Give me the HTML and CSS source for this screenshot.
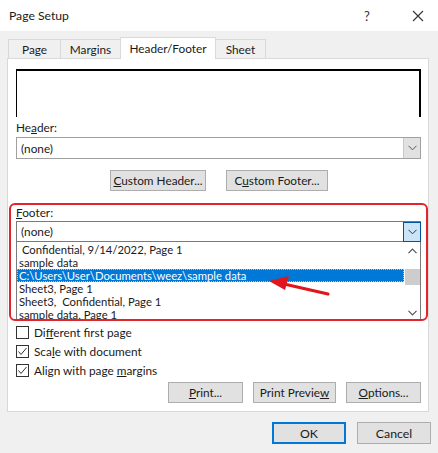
FILE: index.html
```html
<!DOCTYPE html>
<html>
<head>
<meta charset="utf-8">
<link rel="stylesheet" href="styles.css">
</head>
<body>
<div class="dialog">
  <div class="titlebar">
    <span class="title">Page Setup</span>
    <span class="help">?</span>
    <span class="close"><svg width="12" height="12" viewBox="0 0 12 12"><path d="M1 1L11 11M11 1L1 11" stroke="#333" stroke-width="1.1" fill="none"/></svg></span>
  </div>
  <div class="tabs">
    <div class="tab t-page">Page</div>
    <div class="tab t-margins">Margins</div>
    <div class="tab t-hf active">Header/Footer</div>
    <div class="tab t-sheet">Sheet</div>
  </div>
  <div class="panel">
    <div class="preview"></div>
    <div class="label">He<u>a</u>der:</div>
    <div class="select">
      <span class="value">(none)</span>
      <span class="dropbtn"><svg width="9" height="6" viewBox="0 0 9 6"><path d="M0.5 0.8L4.5 4.8L8.5 0.8" stroke="#555" stroke-width="1" fill="none"/></svg></span>
    </div>
    <div class="custom-row">
      <div class="btn custom"><span><u>C</u>ustom Header...</span></div>
      <div class="btn custom"><span>C<u>u</u>stom Footer...</span></div>
    </div>
    <div class="highlight">
      <div class="label f-label"><u>F</u>ooter:</div>
      <div class="select focus">
        <span class="value">(none)</span>
        <span class="dropbtn hot"><svg width="9" height="6" viewBox="0 0 9 6"><path d="M0.5 0.8L4.5 4.8L8.5 0.8" stroke="#333" stroke-width="1" fill="none"/></svg></span>
      </div>
      <div class="listbox">
        <div class="items">
          <div class="item"> Confidential, 9/14/2022, Page 1</div>
          <div class="item">sample data</div>
          <div class="item sel">C:\Users\User\Documents\weez\sample data</div>
          <div class="item">Sheet3, Page 1</div>
          <div class="item">Sheet3,  Confidential, Page 1</div>
          <div class="item">sample data, Page 1</div>
        </div>
        <div class="scrollbar">
          <span class="arrow"><svg width="9" height="6" viewBox="0 0 9 6"><path d="M0.5 5.2L4.5 1.2L8.5 5.2" stroke="#555" stroke-width="1.2" fill="none"/></svg></span>
          <span class="thumb"></span>
          <span class="arrow down"><svg width="9" height="6" viewBox="0 0 9 6"><path d="M0.5 0.8L4.5 4.8L8.5 0.8" stroke="#555" stroke-width="1.2" fill="none"/></svg></span>
        </div>
      </div>
      <svg class="red-arrow" width="70" height="26" viewBox="0 0 70 26">
        <path d="M62 19 L18 9" stroke="#e0161c" stroke-width="3.2" stroke-linecap="round" fill="none"/>
        <path d="M3 6 L23 1 L19 15 Z" fill="#e0161c"/>
      </svg>
    </div>
    <div class="checks">
      <div class="check"><span class="box"></span><span>Di<u>f</u>ferent first page</span></div>
      <div class="check"><span class="box"><svg width="11" height="11" viewBox="0 0 11 11"><path d="M1.5 5.5L4 8.5L9.5 2" stroke="#333" stroke-width="1" fill="none"/></svg></span><span>Sca<u>l</u>e with document</span></div>
      <div class="check"><span class="box"><svg width="11" height="11" viewBox="0 0 11 11"><path d="M1.5 5.5L4 8.5L9.5 2" stroke="#333" stroke-width="1" fill="none"/></svg></span><span>Align with page <u>m</u>argins</span></div>
    </div>
    <div class="print-row">
      <div class="btn pbtn"><span><u>P</u>rint...</span></div>
      <div class="btn pbtn"><span>Print Previe<u>w</u></span></div>
      <div class="btn pbtn"><span><u>O</u>ptions...</span></div>
    </div>
  </div>
  <div class="footer-row">
    <div class="btn fbtn ok"><span>OK</span></div>
    <div class="btn fbtn"><span>Cancel</span></div>
  </div>
</div>
</body>
</html>
```
FILE: styles.css
```css
* { box-sizing: border-box; }
html, body { margin: 0; padding: 0; }
body {
  width: 438px;
  height: 453px;
  overflow: hidden;
  background: #f0f0f0;
  font-family: Lato, "Noto Sans", sans-serif;
  font-size: 11.8px;
  color: #1a1a1a;
}
u { text-decoration: underline; text-underline-offset: 1px; }
.dialog { width: 438px; height: 453px; position: relative; }
.titlebar {
  height: 31px;
  background: #fff;
  display: flex;
  align-items: center;
  padding-left: 9px;
}
.title { font-size: 12.2px; flex: 1; }
.help { width: 14px; margin-right: 34px; font-size: 13px; color: #333; }
.close { width: 12px; margin-right: 14px; display: flex; }
.tabs {
  display: flex;
  align-items: flex-end;
  margin-top: 7px;
  padding-left: 8px;
  height: 21px;
  position: relative;
  z-index: 2;
}
.tab {
  height: 19px;
  border: 1px solid #d9d9d9;
  border-bottom: none;
  background: #f0f0f0;
  display: flex;
  align-items: center;
  justify-content: center;
  margin-bottom: 1px;
  margin-right: -1px;
}
.t-page { width: 53px; }
.t-margins { width: 61px; }
.t-hf { width: 96px; }
.t-sheet { width: 51px; }
.tab.active {
  height: 22px;
  background: #fff;
  margin-bottom: 0;
  position: relative;
}
.panel {
  margin-top: -1px;
  margin-left: 7px;
  width: 422px;
  height: 354px;
  background: #fff;
  border: 1px solid #d9d9d9;
  padding: 10px 7px 0 8px;
}
.preview {
  height: 48px;
  border-top: 2px solid #000;
  border-left: 1px solid #000;
  border-right: 2px solid #000;
}
.label { height: 16px; line-height: 16px; margin-top: 3px; margin-bottom: 1px; }
.select {
  height: 22px;
  border: 1px solid #a0a0a0;
  display: flex;
  align-items: center;
  padding-left: 4px;
}
.select .value { flex: 1; }
.dropbtn {
  width: 17px;
  height: 20px;
  background: #e1e1e1;
  border-left: 1px solid #c8c8c8;
  display: flex;
  align-items: center;
  justify-content: center;
}
.custom-row {
  display: flex;
  gap: 20px;
  margin-top: 11px;
  padding-left: 94px;
}
.btn {
  height: 21px;
  background: #e1e1e1;
  border: 1px solid #adadad;
  display: flex;
  align-items: center;
  justify-content: center;
  white-space: nowrap;
}
.custom { width: 96px; }
.custom + .custom { width: 102px; }
.highlight {
  margin: 12px -7px 0 -7px;
  height: 118px;
  border: 2px solid #e0252c;
  border-radius: 6px;
  padding: 0 5px;
  position: relative;
  overflow: hidden;
}
.f-label { margin-top: 0; margin-bottom: 0; height: 16px; line-height: 15px; }
.select.focus { height: 20px; border-color: #7a7a7a; border-bottom: none; }
.dropbtn.hot {
  height: 20px;
  width: 18px;
  background: #cce4f7;
  border: 1px solid #005499;
  margin-right: -1px;
}
.listbox {
  height: 80px;
  border: 1px solid #7a7a7a;
  display: flex;
}
.items { flex: 1; padding-top: 1px; }
.item {
  height: 13px;
  line-height: 13px;
  padding-left: 2px;
  white-space: pre;
  font-size: 11.3px;
}
.item.sel {
  background: #0078d7;
  color: #fff;
  outline: 1px dotted #9ccaf0;
  outline-offset: -1px;
}
.scrollbar {
  width: 16px;
  display: flex;
  flex-direction: column;
  align-items: center;
}
.arrow { height: 17px; display: flex; align-items: center; justify-content: center; }
.thumb { width: 15px; height: 16px; background: #cdcdcd; margin-top: 10px; }
.arrow.down { margin-top: auto; height: 14px; }
.red-arrow { position: absolute; left: 255px; top: 70px; }
.checks { margin-top: 5px; display: flex; flex-direction: column; gap: 6px; }
.check { display: flex; align-items: center; height: 13px; gap: 5px; }
.box {
  width: 13px;
  height: 13px;
  border: 1px solid #333;
  display: flex;
  align-items: center;
  justify-content: center;
  background: #fff;
}
.print-row {
  display: flex;
  justify-content: flex-end;
  gap: 10px;
  margin-top: 5px;
}
.pbtn { width: 75px; height: 21px; }
.pbtn + .pbtn { width: 83px; }
.pbtn + .pbtn + .pbtn { width: 75px; }
.footer-row {
  display: flex;
  gap: 11px;
  margin-top: 10px;
  padding-left: 272px;
}
.fbtn { width: 74px; height: 22px; font-size: 12.3px; }
.fbtn.ok { border: 2px solid #0078d7; }
```
